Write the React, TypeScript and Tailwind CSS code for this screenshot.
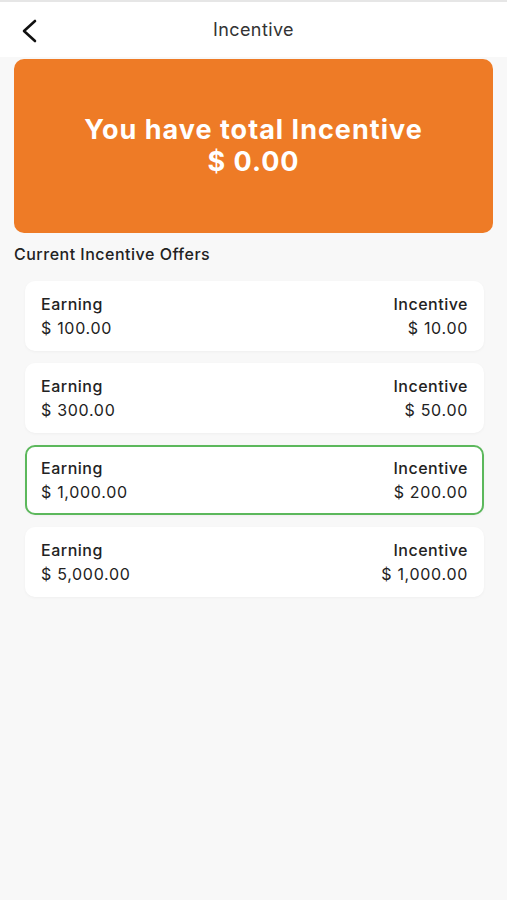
import React from "react";

const offers = [
  { earning: "$ 100.00", incentive: "$ 10.00", active: false },
  { earning: "$ 300.00", incentive: "$ 50.00", active: false },
  { earning: "$ 1,000.00", incentive: "$ 200.00", active: true },
  { earning: "$ 5,000.00", incentive: "$ 1,000.00", active: false },
];

export default function App() {
  return (
    <div
      className="min-h-[900px] w-[507px] bg-[#f8f8f8] text-[#222]"
      style={{ fontFamily: "Inter, 'Noto Sans', sans-serif" }}
    >
      <div className="h-[2px] bg-[#e6e6e6]" />
      <header className="relative flex h-[55px] items-center justify-center bg-white">
        <button className="absolute left-[20px] top-[17px] flex h-[24px] w-[18px] items-center justify-center">
          <svg width="18" height="24" viewBox="0 0 18 24" fill="none">
            <path d="M15 2 L4 12 L15 22" stroke="#111" strokeWidth="2.6" strokeLinecap="round" strokeLinejoin="round" />
          </svg>
        </button>
        <h1 className="text-[18px] font-normal tracking-[0.4px] text-[#333]">Incentive</h1>
      </header>
      <div className="px-[14px] pt-[2px]">
        <div className="flex h-[174px] flex-col items-center justify-center rounded-[10px] bg-[#ee7b26] text-white">
          <div className="text-[27px] font-bold leading-[32px] tracking-[1px]">You have total Incentive</div>
          <div className="text-[27px] font-bold leading-[32px] tracking-[1px]">$ 0.00</div>
        </div>
        <div className="mt-[10px] text-[16px] font-medium leading-[22px] tracking-[0.5px] text-[#222]">
          Current Incentive Offers
        </div>
      </div>
      <div className="mt-[16px] flex flex-col gap-[12px] px-[25px] pr-[23px]">
        {offers.map((o, i) => (
          <div
            key={i}
            className={
              o.active
                ? "flex h-[70px] items-center justify-between rounded-[10px] border-2 border-[#5cb85c] bg-white px-[14px] shadow-[0_1px_3px_rgba(0,0,0,0.04)]"
                : "flex h-[70px] items-center justify-between rounded-[10px] border-2 border-white bg-white px-[14px] shadow-[0_1px_3px_rgba(0,0,0,0.04)]"
            }
          >
            <div className="flex flex-col gap-[3px]">
              <span className="text-[16px] font-medium leading-[21px] tracking-[0.5px] text-[#222]">Earning</span>
              <span className="text-[16px] font-normal leading-[21px] tracking-[0.7px] text-[#222]">{o.earning}</span>
            </div>
            <div className="flex flex-col items-end gap-[3px]">
              <span className="text-[16px] font-medium leading-[21px] tracking-[0.5px] text-[#222]">Incentive</span>
              <span className="text-[16px] font-normal leading-[21px] tracking-[0.7px] text-[#222]">{o.incentive}</span>
            </div>
          </div>
        ))}
      </div>
    </div>
  );
}
